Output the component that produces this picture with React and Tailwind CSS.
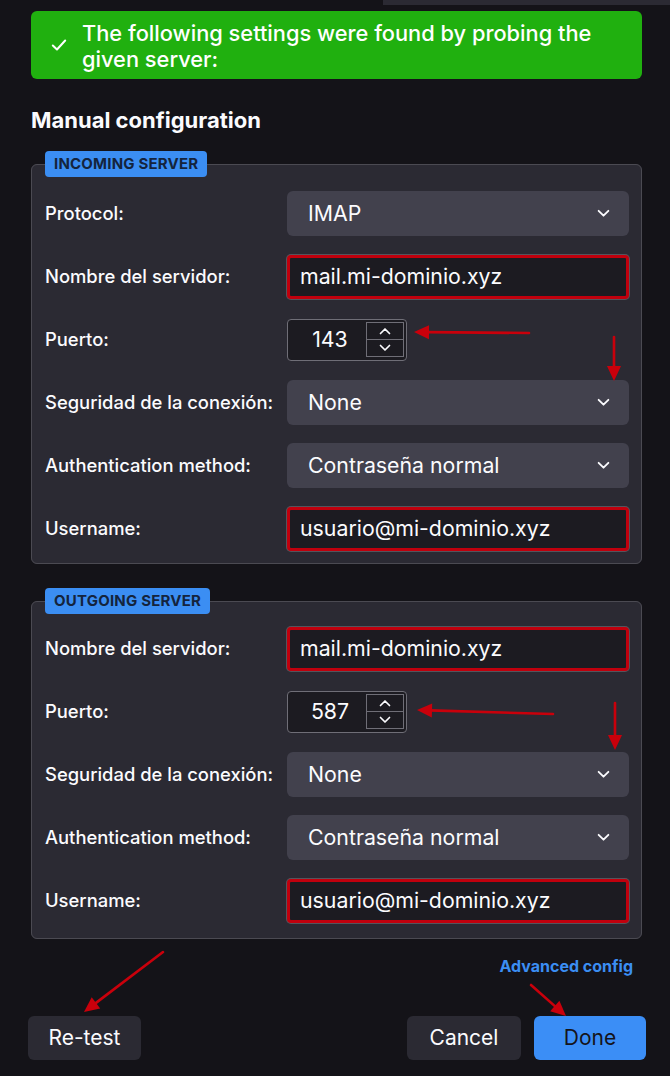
import React from "react";

const font = { fontFamily: "Inter, 'Noto Sans', sans-serif" };

function Chevron({ up = false, className = "" }) {
  return (
    <svg viewBox="0 0 12 8" className={className} fill="none">
      <path
        d={up ? "M1.5 6.5 6 2l4.5 4.5" : "M1.5 1.5 6 6l4.5-4.5"}
        stroke="currentColor"
        strokeWidth="1.7"
        strokeLinecap="round"
        strokeLinejoin="round"
      />
    </svg>
  );
}

function Arrow({ x1, y1, x2, y2 }) {
  const dx = x2 - x1;
  const dy = y2 - y1;
  const len = Math.hypot(dx, dy);
  const ux = dx / len;
  const uy = dy / len;
  const bx = x2 - ux * 15;
  const by = y2 - uy * 15;
  const px = -uy * 7;
  const py = ux * 7;
  return (
    <g>
      <line x1={x1} y1={y1} x2={bx + ux * 2} y2={by + uy * 2} stroke="#c9000b" strokeWidth="2.6" strokeLinecap="round" />
      <polygon points={`${x2},${y2} ${bx + px},${by + py} ${bx - px},${by - py}`} fill="#c9000b" />
    </g>
  );
}

function Label({ children }) {
  return <div className="text-[18.4px] font-medium text-[#fbfbfe]">{children}</div>;
}

function SelectBox({ value }) {
  return (
    <div className="h-[45px] rounded-md bg-[#42414d] pl-[21px] pr-[19px] flex items-center justify-between text-[21.3px] text-[#fbfbfe]">
      <span>{value}</span>
      <Chevron className="w-[13px] h-[9px]" />
    </div>
  );
}

function TextBox({ value }) {
  return (
    <div className="h-[44px] rounded-[4px] bg-[#1c1b21] border-[3px] border-[#c0000d] ring-1 ring-[#55545c] pl-[10px] flex items-center text-[21.3px] text-[#fbfbfe]">
      {value}
    </div>
  );
}

function NumberBox({ value }) {
  return (
    <div className="h-[42px] w-[120px] rounded-[4px] bg-[#1c1b21] border border-[#6f6e77] flex items-center">
      <div className="flex-1 text-center text-[21.3px] text-[#fbfbfe] pl-[6px]">{value}</div>
      <div className="mr-[2px] w-[38px] h-[35px] border border-[#6f6e77] flex flex-col text-[#fbfbfe]">
        <div className="flex-1 border-b border-[#6f6e77] flex items-center justify-center">
          <Chevron up className="w-[12px] h-[8px]" />
        </div>
        <div className="flex-1 flex items-center justify-center">
          <Chevron className="w-[12px] h-[8px]" />
        </div>
      </div>
    </div>
  );
}

function Server({ title, rows, className = "" }) {
  return (
    <fieldset className={`border border-[#4b4a52] rounded-md bg-[#2b2a33] pl-[13px] pr-[12px] ${className}`}>
      <legend className="bg-[#3b8ef3] rounded-[4px] px-[9px] h-[26px] flex items-center text-[15px] font-bold text-[#14243d] tracking-[0.2px]">
        {title}
      </legend>
      <div className="grid grid-cols-[242px_1fr] gap-y-[18px] items-center">
        {rows.map((r, i) => (
          <React.Fragment key={i}>
            <Label>{r.label}</Label>
            <div className="h-[45px] flex items-center">
              <div className={r.type === "number" ? "" : "w-full"}>
                {r.type === "select" && <SelectBox value={r.value} />}
                {r.type === "text" && <TextBox value={r.value} />}
                {r.type === "number" && <NumberBox value={r.value} />}
              </div>
            </div>
          </React.Fragment>
        ))}
      </div>
    </fieldset>
  );
}

const incoming = [
  { label: "Protocol:", type: "select", value: "IMAP" },
  { label: "Nombre del servidor:", type: "text", value: "mail.mi-dominio.xyz" },
  { label: "Puerto:", type: "number", value: "143" },
  { label: "Seguridad de la conexión:", type: "select", value: "None" },
  { label: "Authentication method:", type: "select", value: "Contraseña normal" },
  { label: "Username:", type: "text", value: "usuario@mi-dominio.xyz" },
];

const outgoing = [
  { label: "Nombre del servidor:", type: "text", value: "mail.mi-dominio.xyz" },
  { label: "Puerto:", type: "number", value: "587" },
  { label: "Seguridad de la conexión:", type: "select", value: "None" },
  { label: "Authentication method:", type: "select", value: "Contraseña normal" },
  { label: "Username:", type: "text", value: "usuario@mi-dominio.xyz" },
];

export default function App() {
  return (
    <div className="relative w-[670px] h-[1076px] bg-[#141318] overflow-hidden text-[#fbfbfe]" style={font}>
      <div className="ml-[383px] h-[5px] bg-[#2b2a33]" />

      <div className="pl-[31px] pr-[28px]">
        {/* banner */}
        <div className="mt-[6px] h-[68px] rounded-md bg-[#20b00f] flex items-center pl-[19px] gap-[14px]">
          <svg viewBox="0 0 16 16" className="w-[18px] h-[18px] shrink-0" fill="none">
            <path d="M2.5 8.5 6.2 12 13.5 4" stroke="#fff" strokeWidth="1.8" strokeLinecap="round" strokeLinejoin="round" />
          </svg>
          <p className="pt-[2px] text-[21.8px] leading-[26px] font-medium text-white">
            The following settings were found by probing the given server:
          </p>
        </div>

        <h2 className="mt-[26px] text-[22px] font-bold leading-[30px]">Manual configuration</h2>

        <Server title="INCOMING SERVER" rows={incoming} className="mt-[16px] pt-[14px] pb-[12px]" />
        <Server title="OUTGOING SERVER" rows={outgoing} className="mt-[24px] pt-[12px] pb-[15px]" />

        <div className="mt-[15px] flex justify-end pr-[9px]">
          <a className="text-[16px] font-bold text-[#3b8ef3]">Advanced config</a>
        </div>
      </div>

      <div className="mt-[38px] pl-[28px] pr-[24px] flex items-center gap-[13px]">
        <button className="h-[44px] w-[113px] rounded-md bg-[#2b2a33] text-[21px] text-[#fbfbfe]">Re-test</button>
        <div className="flex-1" />
        <button className="h-[44px] w-[114px] rounded-md bg-[#2b2a33] text-[21px] text-[#fbfbfe]">Cancel</button>
        <button className="h-[44px] w-[112px] rounded-md bg-[#3b8ef6] text-[21px] text-[#15141a]">Done</button>
      </div>

      {/* annotations */}
      <svg className="absolute inset-0 pointer-events-none" width="670" height="1076">
        <Arrow x1={529} y1={333} x2={414} y2={332} />
        <Arrow x1={614} y1={337} x2={614} y2={381} />
        <Arrow x1={553} y1={714} x2={417} y2={710} />
        <Arrow x1={615} y1={703} x2={615} y2={750} />
        <Arrow x1={163} y1={952} x2={84} y2={1012} />
        <Arrow x1={531} y1={985} x2={566} y2={1016} />
      </svg>
    </div>
  );
}
